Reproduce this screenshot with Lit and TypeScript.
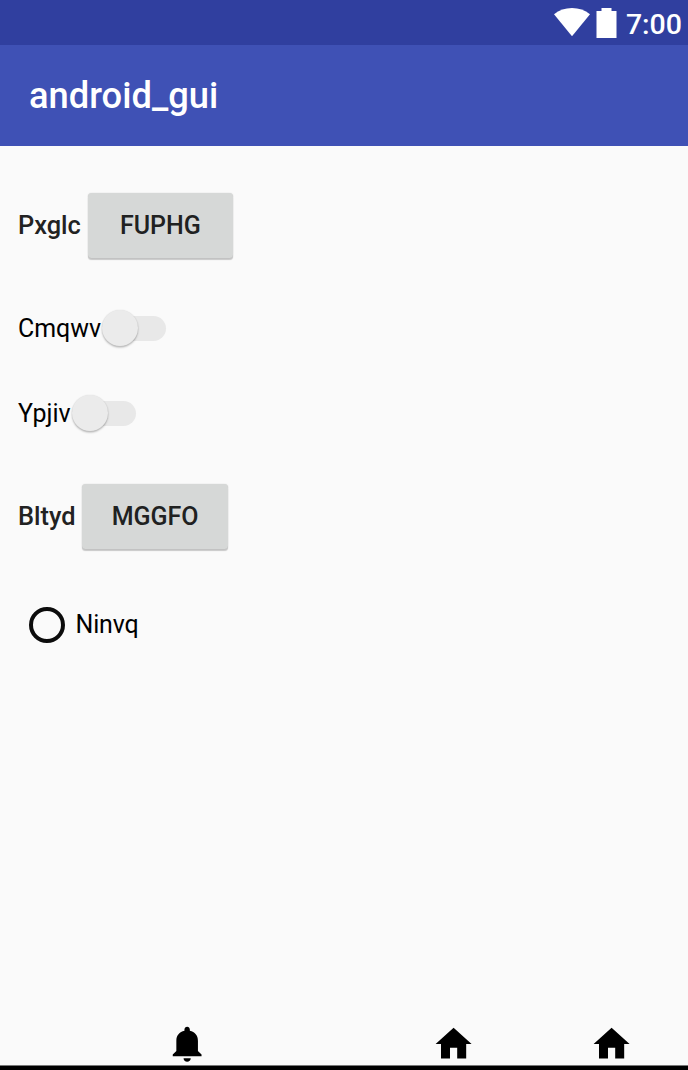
import { LitElement, html, css } from "lit";
import { customElement, property } from "lit/decorators.js";

@customElement("text-button")
class TextButton extends LitElement {
  @property() label = "";
  static styles = css`
    :host { display: block; }
    button {
      display: block; width: 145.6px; height: 65px; margin: 0; padding: 0; border: 0;
      border-radius: 3.5px; background: #d6d8d7; color: #202121;
      font: 500 25px/64px Roboto, sans-serif; text-align: center;
      box-shadow: 0 1.5px 1px rgba(0, 0, 0, 0.2), 0 0 1.5px rgba(0, 0, 0, 0.14);
    }
  `;
  render() {
    return html`<button>${this.label}</button>`;
  }
}

@customElement("toggle-switch")
class ToggleSwitch extends LitElement {
  static styles = css`
    :host { display: block; }
    .track {
      display: flex; align-items: center; box-sizing: border-box;
      width: 61px; height: 25px; margin-left: 4px; border-radius: 12.5px; background: #e8e8e8;
    }
    .thumb {
      flex: none; width: 36px; height: 36px; margin-left: -3px; border-radius: 50%;
      background: #ebebeb;
      box-shadow: 0 1.5px 2px rgba(0, 0, 0, 0.26), 0 0 1.5px rgba(0, 0, 0, 0.1);
    }
  `;
  render() {
    return html`<div class="track"><div class="thumb"></div></div>`;
  }
}

@customElement("app-root")
class AppRoot extends LitElement {
  static styles = css`
    :host {
      display: flex; flex-direction: column; width: 688px; height: 1070px; overflow: hidden;
      background: #fafafa; color: #000; font: 400 24.95px/30px Roboto, sans-serif;
    }
    svg { display: block; flex: none; }
    .status {
      display: flex; height: 45px; flex: none; background: #303f9f; color: #fff;
      justify-content: flex-end; box-sizing: border-box; padding-right: 6px;
    }
    .wifi { margin: 8px 6px 0 0; }
    .battery { margin: 8px 9px 0 0; }
    .clock { font-size: 28.5px; font-weight: 500; line-height: 34px; padding-top: 8px; }
    .bar {
      flex: none; height: 101px; box-sizing: border-box; padding-left: 29px;
      background: #3f51b5; color: #fff; font: 500 36.3px/101px Roboto, sans-serif;
    }
    main { flex: 1; padding: 47px 0 0 18px; }
    .row { display: flex; align-items: center; }
    .strong { font-weight: 500; font-size: 25.4px; color: #222; padding-bottom: 2px; }
    .r1 { height: 65px; gap: 6.7px; }
    .r2 { height: 36px; margin-top: 52px; }
    .r3 { height: 36px; margin-top: 49px; }
    .r2 span, .r3 span { padding-top: 2px; }
    .r4 { height: 65px; margin-top: 53px; gap: 6.8px; }
    .r5 { height: 36px; margin: 58px 0 0 11px; gap: 10.5px; }
    .r5 span { padding-bottom: 1px; letter-spacing: -0.15px; }
    .radio {
      width: 36px; height: 36px; box-sizing: border-box; border: 4px solid #0c0c0c; border-radius: 50%;
    }
    nav {
      display: grid; grid-template-columns: 266px 158.4px 43.2px;
      padding-left: 166px; height: 43px; flex: none;
    }
    .edge { flex: none; box-sizing: border-box; height: 5px; border-top: 1px solid #777; background: #000; }
  `;

  home() {
    return html`<svg width="43.2" height="43.2" viewBox="0 -0.25 24 24">
      <path d="M10 20v-6h4v6h5v-8h3L12 3 2 12h3v8z" />
    </svg>`;
  }

  render() {
    return html`
      <div class="status">
        <svg class="wifi" width="36" height="29" viewBox="0 0 36 29">
          <path fill="#fff" d="M0 6.3C5 2.2 11.2 0 18 0s13 2.2 18 6.3L18 28.3z" />
        </svg>
        <svg class="battery" width="21" height="30" viewBox="0 0 21 30">
          <path fill="#fff" d="M5.5 0h10v3H20.5v27H.5V3h5z" />
        </svg>
        <span class="clock">7:00</span>
      </div>
      <div class="bar">android_gui</div>
      <main>
        <div class="row r1"><span class="strong">Pxglc</span><text-button label="FUPHG"></text-button></div>
        <div class="row r2"><span>Cmqwv</span><toggle-switch></toggle-switch></div>
        <div class="row r3"><span>Ypjiv</span><toggle-switch></toggle-switch></div>
        <div class="row r4"><span class="strong">Bltyd</span><text-button label="MGGFO"></text-button></div>
        <div class="row r5"><div class="radio"></div><span>Ninvq</span></div>
      </main>
      <nav>
        <svg width="43.2" height="43.2" viewBox="0.25 -0.1 24 24">
          <path d="M12 22c1.1 0 2-.9 2-2h-4c0 1.1.89 2 2 2zm6-6v-5.6c0-3.1-1.7-4.9-4.5-5.6V4c0-.83-.67-1.5-1.5-1.5s-1.5.67-1.5 1.5v.8C7.7 5.5 6 7.3 6 10.4V16l-2 2v1h16v-1l-2-2z" />
        </svg>
        ${this.home()} ${this.home()}
      </nav>
      <div class="edge"></div>
    `;
  }
}
